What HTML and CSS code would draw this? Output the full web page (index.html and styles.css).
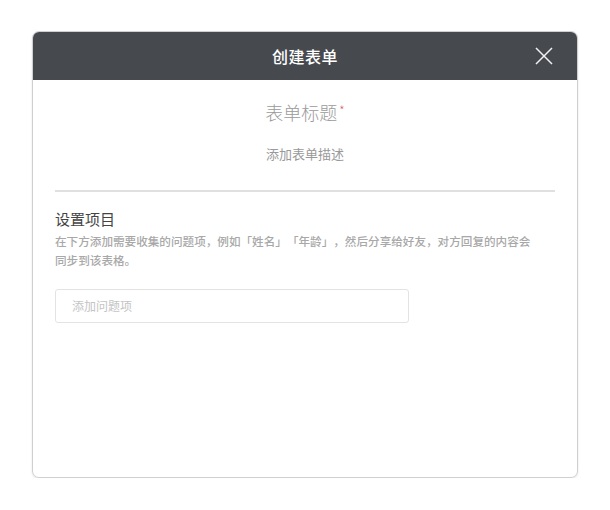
FILE: index.html
```html
<!DOCTYPE html>
<html lang="zh">
<head>
<meta charset="utf-8">
<link rel="stylesheet" href="styles.css">
</head>
<body>
<div class="dialog">
  <div class="header">
    <span class="header-title">创建表单</span>
    <svg class="close" width="18" height="18" viewBox="0 0 18 18"><path d="M1 1L17 17M17 1L1 17" stroke="#f2f2f2" stroke-width="1.5" fill="none"/></svg>
  </div>
  <div class="content">
    <div class="form-title">表单标题<span class="star">*</span></div>
    <div class="form-desc">添加表单描述</div>
    <div class="divider"></div>
    <div class="section-title">设置项目</div>
    <div class="section-desc">在下方添加需要收集的问题项，例如「姓名」「年龄」，然后分享给好友，对方回复的内容会同步到该表格。</div>
    <div class="input">添加问题项</div>
  </div>
</div>
</body>
</html>
```
FILE: styles.css
```css
html, body { margin: 0; padding: 0; background: #fff; }
body { font-family: "Noto Sans CJK SC", "Liberation Sans", sans-serif; }
.dialog {
  margin: 31px 0 0 32px;
  width: 546px;
  height: 447px;
  box-sizing: border-box;
  border: 1px solid #cfcfcf;
  border-radius: 7px;
  box-shadow: 0 1px 2px rgba(0,0,0,0.12);
  overflow: hidden;
  display: flex;
  flex-direction: column;
}
.header {
  height: 48px;
  flex: none;
  background: #464a4f;
  display: flex;
  align-items: center;
  justify-content: center;
  position: relative;
}
.header-title { color: #fff; font-size: 16px; font-weight: 500; letter-spacing: 0.5px; }
.close { position: absolute; right: 24px; top: 15px; }
.content { padding: 0 22px 0 22px; }
.form-title {
  margin-top: 19px;
  text-align: center;
  font-size: 18px;
  line-height: 26px;
  color: #9a9a9a;
  font-weight: 300;
}
.star { color: #e06060; font-size: 12px; vertical-align: top; margin-left: 2px; position: relative; top: -2px; }
.form-desc {
  margin-top: 20px;
  text-align: center;
  font-size: 13px;
  line-height: 18px;
  color: #999;
}
.divider { margin-top: 27px; height: 2px; background: #e0e0e0; }
.section-title {
  margin-top: 16px;
  font-size: 15px;
  line-height: 21px;
  color: #444;
  font-weight: 400;
}
.section-desc {
  margin-top: 3px;
  font-size: 11.6px;
  line-height: 19px;
  color: #a8a8a8;
  font-weight: 500;
  width: 480px;
  text-spacing-trim: space-all;
}
.input {
  margin-top: 19px;
  width: 354px;
  height: 34px;
  box-sizing: border-box;
  border: 1px solid #e3e3e3;
  border-radius: 3px;
  padding-left: 16px;
  font-size: 12px;
  line-height: 32px;
  color: #c4c4c4;
}
```
